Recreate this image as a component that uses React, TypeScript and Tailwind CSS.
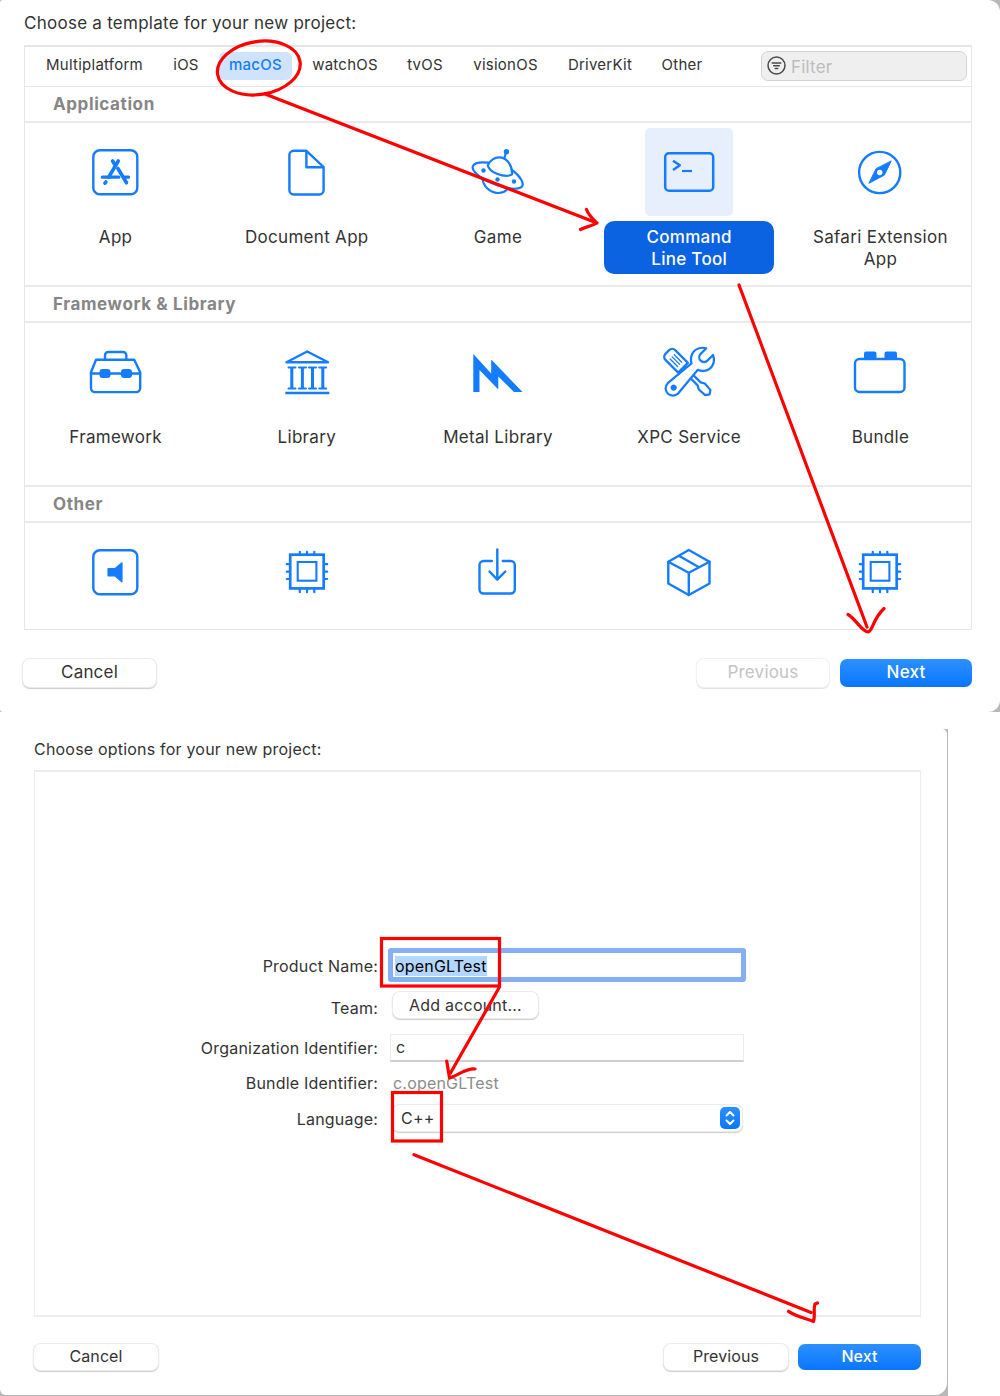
import type { ReactNode } from "react";

const BLUE = "#147cff";

function Icon({ children, sw = 2.4 }: { children: ReactNode; sw?: number }) {
  return (
    <svg
      width="60"
      height="60"
      viewBox="0 0 60 60"
      fill="none"
      stroke={BLUE}
      strokeWidth={sw}
      strokeLinecap="round"
      strokeLinejoin="round"
    >
      {children}
    </svg>
  );
}

const AppIcon = () => (
  <Icon>
    <rect x="7.3" y="8.3" width="44" height="44" rx="6.5" />
    <g strokeWidth="3.6" transform="translate(-0.7 0)">
      <path d="M27.3 19l2 3.2M33 19L23.4 35.2" />
      <path d="M32.6 26.5l8.6 14.3" />
      <path d="M17 35.2h16.5M39.7 35.2h3.6" strokeWidth="3.2" />
      <path d="M20.6 40l-.9 1.2" />
    </g>
  </Icon>
);

const DocIcon = () => (
  <Icon>
    <path d="M16.6 8.8h12.8L46.6 25v23.3a4.2 4.2 0 0 1-4.2 4.2H16.6a4.2 4.2 0 0 1-4.2-4.2V13a4.2 4.2 0 0 1 4.2-4.2z" />
    <path d="M29.4 9.3v16h16.6" />
  </Icon>
);

const GameIcon = () => (
  <Icon sw={2.2}>
    <g transform="translate(-1 2)">
      <path d="M20.8 21.5c2-5.2 7-8.6 12.3-8.1 7.1.7 12.3 8.4 12 16.9-3.1 2-9.3 1.7-15.1-.6-5-1.9-8.5-5-9.2-8.2z" />
      <path d="M21.5 18.7c-7-.8-13.6-.4-15.5 3.2-2 4 4.8 10.5 15.2 15.5 12 5.8 26.5 9.2 32.5 6.2 5.5-3-1-12-8.8-17.7" />
      <path d="M15.5 34.500c.5 7.500 7.500 14.500 15.500 14.500 4.400 0 8-1.500 10-4.600" />
      <path d="M37.3 14.5l1.7-6" />
      <g fill={BLUE} stroke="none">
        <circle cx="39.4" cy="7.7" r="2.7" />
        <circle cx="16.5" cy="26.5" r="2.2" />
        <circle cx="30.5" cy="35.5" r="2.2" />
        <circle cx="47" cy="37.5" r="2.2" />
      </g>
    </g>
  </Icon>
);

const TerminalIcon = () => (
  <Icon sw={2.5}>
    <rect x="6.2" y="11.3" width="48" height="37.5" rx="3.8" />
    <path d="M14 18.7l6.9 4.5L14 28" strokeWidth="2.4" strokeLinecap="butt" />
    <path d="M23 29h10" strokeWidth="2.2" strokeLinecap="butt" />
  </Icon>
);

const SafariIcon = () => (
  <Icon>
    <circle cx="29.7" cy="30.5" r="20.6" />
    <path d="M41 19.3l-6.5 13.7-15.6 8.3 7-14.3z" fill={BLUE} stroke={BLUE} strokeWidth="1" />
    <circle cx="29.7" cy="30.5" r="2.7" fill="#fff" stroke="none" />
  </Icon>
);

const FrameworkIcon = () => (
  <Icon>
    <path d="M19 17.5v-4.2a3.3 3.3 0 0 1 3.3-3.3h14.7a3.3 3.3 0 0 1 3.3 3.3v4.2" />
    <path d="M11 17.7h37.2l6 12.6v15.8a4 4 0 0 1-4 4H9a4 4 0 0 1-4-4V30.3l5-12.6z" />
    <path d="M5 31.5h49" />
    <g fill={BLUE} stroke="none">
      <rect x="13.5" y="27" width="11" height="9" rx="3" />
      <rect x="35" y="27" width="11" height="9" rx="3" />
    </g>
  </Icon>
);

const LibraryIcon = () => (
  <Icon>
    <path d="M9.5 20.3L30.2 9.5l20.9 10.8z" />
    <path d="M8.3 51h44" strokeWidth="2.7" strokeLinecap="butt" />
    <path d="M14.8 25.5v21M25.4 25.5v21M35.5 25.5v21M45.8 25.5v21" strokeWidth="3" strokeLinecap="butt" />
    <path
      d="M11.5 25.5h7M22 25.5h7M32 25.5h7M42.2 25.5h7M11.5 46.5h7M22 46.5h7M32 46.5h7M42.2 46.5h7"
      strokeWidth="2"
    />
  </Icon>
);

const MetalIcon = () => (
  <Icon>
    <path d="M5.3 12L23.2 31.5V17.5L54.5 50H46L30.3 34.5v13L11.5 28V50H5.3z" fill={BLUE} stroke="none" />
  </Icon>
);

const XpcIcon = () => (
  <Icon sw={2.1}>
    <g transform="translate(29.3 31) scale(1.06) rotate(-45)">
      <path d="M-6.5 -7V-24a4 4 0 0 1 4-4h5a4 4 0 0 1 4 4v17z" />
      <path d="M-2.8-21.5v10M0-21.5v10M2.8-21.5v10" strokeWidth="1.2" />
      <path d="M-2 -7V14.5l-2 3.5.5 8 3.5 2.5 3.5-2.5.5-8-2-3.5V-7" />
    </g>
    <g transform="translate(29.3 31) scale(1.06) rotate(45)">
      <path
        fill="#fff"
        d="M-4.2 -8.5C-10.3 -12 -12.3 -18.5 -9.3 -23.7C-8 -26 -6.5 -27.4 -4.5 -28.5V-21a4.5 4.5 0 0 0 9 0V-28.5C11 -25.5 13.3 -18.5 9.8 -13C8.5 -11 6.6 -9.3 4.2 -8.5L6.9 20.5a6.9 6.9 0 0 1-13.8 0z"
      />
      <circle cx="0" cy="19.5" r="1.8" fill={BLUE} />
    </g>
  </Icon>
);

const BundleIcon = () => (
  <Icon>
    <rect x="5" y="17" width="49.5" height="33" rx="4.5" />
    <path
      d="M14 18v-6.500a2 2 0 0 1 2-2h8.500a2 2 0 0 1 2 2v6.500zM34.500 18v-6.500a2 2 0 0 1 2-2h8.500a2 2 0 0 1 2 2v6.500z"
      fill={BLUE}
      stroke="none"
    />
  </Icon>
);

const SpeakerIcon = () => (
  <Icon>
    <rect x="7.3" y="8.3" width="44" height="44" rx="6.5" />
    <path
      d="M22.3 26h6.5l6.5-5.5c.6-.5 1.3-.2 1.3.6v18.5c0 .8-.7 1.1-1.3.6l-6.500-5.700h-6.500a.9.900 0 0 1-.9-.9v-6.700a.9.900 0 0 1 .9-.9z"
      fill={BLUE}
      stroke="none"
    />
  </Icon>
);

const ChipIcon = () => (
  <Icon>
    <g strokeLinejoin="miter" strokeWidth="2.7">
      <rect x="13.2" y="12.7" width="33.5" height="33.7" />
      <rect x="20.7" y="20" width="18.7" height="18.7" strokeWidth="2.1" />
    </g>
    <path
      d="M22.8 12V9.8M30 12V9.8M37.3 12V9.8M22.8 47v3.2M30 47v3.2M37.3 47v3.2M13 22.2H9.8M13 29.7H9.8M13 37H9.8M47 22.2h3.2M47 29.7h3.2M47 37h3.2"
      strokeWidth="2.2"
    />
  </Icon>
);

const DownloadIcon = () => (
  <Icon>
    <path d="M23.8 19h-8.3a4 4 0 0 0-4 4v24.5a4 4 0 0 0 4 4h27.3a4 4 0 0 0 4-4V23a4 4 0 0 0-4-4h-8" />
    <path d="M29.3 7.5v30M21.5 29.5l7.8 8.2 8-8.2" />
  </Icon>
);

const BoxIcon = () => (
  <Icon>
    <path d="M29.8 8l20.7 11.8v21.7L29.8 53 9.3 41.5V19.8z" />
    <path d="M9.3 19.8l20.5 11 20.7-11M29.8 30.8V53M20.3 14L40 25.3" />
  </Icon>
);

type Item = { label: string; icon: ReactNode; selected?: boolean };

const applications: Item[] = [
  { label: "App", icon: <AppIcon /> },
  { label: "Document App", icon: <DocIcon /> },
  { label: "Game", icon: <GameIcon /> },
  { label: "Command Line Tool", icon: <TerminalIcon />, selected: true },
  { label: "Safari Extension App", icon: <SafariIcon /> },
];
const frameworks: Item[] = [
  { label: "Framework", icon: <FrameworkIcon /> },
  { label: "Library", icon: <LibraryIcon /> },
  { label: "Metal Library", icon: <MetalIcon /> },
  { label: "XPC Service", icon: <XpcIcon /> },
  { label: "Bundle", icon: <BundleIcon /> },
];
const others: Item[] = [
  { label: "", icon: <SpeakerIcon /> },
  { label: "", icon: <ChipIcon /> },
  { label: "", icon: <DownloadIcon /> },
  { label: "", icon: <BoxIcon /> },
  { label: "", icon: <ChipIcon /> },
];

function Section({ title, items, height }: { title: string; items: Item[]; height: string }) {
  return (
    <section>
      <h2 className="flex h-9 items-center border-b-2 border-[#eaeaea] pl-7 pt-[2px] text-[17px] font-bold tracking-[0.6px] text-[#868686]">
        {title}
      </h2>
      <div className={`-ml-[5px] grid w-[956px] grid-cols-5 pt-[5px] ${height}`}>
        {items.map((it, i) => (
          <div key={i} className="flex flex-col items-center">
            <div
              className={`flex size-[88px] shrink-0 items-center justify-center rounded-[5px] ${it.selected ? "bg-[#e8effc]" : ""}`}
            >
              {it.icon}
            </div>
            {it.label && (
              <div
                className={`mt-[5px] flex w-[170px] justify-center rounded-[10px] pb-1 pt-[5px] text-center text-[17px] leading-[22px] tracking-[0.3px] ${
                  it.selected ? "bg-[#0b63e2] px-8 font-medium text-white" : "px-4 text-[#333]"
                }`}
              >
                {it.label}
              </div>
            )}
          </div>
        ))}
      </div>
    </section>
  );
}

function PushButton({ children, className }: { children: ReactNode; className: string }) {
  return <button className={`flex items-center justify-center rounded-[7px] ${className}`}>{children}</button>;
}

const plain = "bg-white text-[#333] shadow-[0_0_0_1px_#ebebeb,0_1px_1px_1px_#cccccc]";
const disabled = "bg-white text-[#c4c4c4] shadow-[0_0_0_1px_#f2f2f2,0_1px_1px_1px_#e2e2e2]";
const primary = "bg-linear-to-b from-[#2b90ff] to-[#0676ff] font-medium text-white";

const tabs = [
  { label: "Multiplatform", cls: "w-[97px]" },
  { label: "iOS", cls: "ml-[30px] w-[26px]" },
  { label: "macOS", cls: "ml-[20px] w-[73px] rounded-md bg-[#cfe3fd] font-medium !text-[#147cff]" },
  { label: "watchOS", cls: "ml-[20px] w-[66px]" },
  { label: "tvOS", cls: "ml-[29px] w-[36px]" },
  { label: "visionOS", cls: "ml-[30px] w-[65px]" },
  { label: "DriverKit", cls: "ml-[30px] w-[64px]" },
  { label: "Other", cls: "ml-[29px] w-[42px]" },
];

function TemplateDialog() {
  return (
    <div className="h-[712px] w-[1000px] bg-[#b8b8b8]">
      <div className="h-full overflow-hidden rounded-[3px_12px_12px_3px] bg-white pl-6 pt-[11px]">
        <h1 className="h-[35px] text-[17px] leading-6 tracking-[0.26px] text-[#333]">
          Choose a template for your new project:
        </h1>
        <div className="-mt-px h-[585px] w-[948px] overflow-hidden border border-[#e6e6e6] border-t-2">
          <div className="flex h-[40px] items-center border-b border-[#e6e6e6] pb-[2px] pl-[21px] pr-1">
            {tabs.map((t) => (
              <div
                key={t.label}
                className={`flex h-7 shrink-0 items-center justify-center whitespace-nowrap text-[15px] tracking-[0.25px] text-[#333] ${t.cls}`}
              >
                {t.label}
              </div>
            ))}
            <div className="ml-auto flex h-[30px] w-[206px] items-center rounded-[7px] border border-[#d3d3d3] bg-[#efefef] pl-[5px]">
              <svg width="20" height="20" viewBox="0 0 20 20" fill="none" stroke="#4a4a4a" strokeWidth="1.5" strokeLinecap="round">
                <circle cx="9.5" cy="9.5" r="8.5" />
                <path d="M5.2 7h8.6M6.7 9.7h5.6M8.2 12.4h2.6" />
              </svg>
              <span className="ml-1 pt-[4px] text-[17px] tracking-[0.2px] text-[#bdbdbd]">Filter</span>
            </div>
          </div>
          <Section title="Application" items={applications} height="h-[162px]" />
          <div className="border-t-2 border-[#eaeaea]">
            <Section title="Framework & Library" items={frameworks} height="h-[162px]" />
          </div>
          <div className="border-t-2 border-[#eaeaea]">
            <Section title="Other" items={others} height="h-[110px]" />
          </div>
        </div>
        <div className="mt-[29px] flex text-[17px] tracking-[0.2px]">
          <PushButton className={`-ml-px h-7 w-[133px] pb-px ${plain}`}>Cancel</PushButton>
          <PushButton className={`ml-[541px] h-7 w-[132px] pb-px ${disabled}`}>Previous</PushButton>
          <PushButton className={`ml-[11px] h-7 w-[132px] pb-px ${primary}`}>Next</PushButton>
        </div>
      </div>
    </div>
  );
}

function Row({ label, className, children }: { label: string; className: string; children: ReactNode }) {
  return (
    <div className={`flex items-center ${className}`}>
      <div className="w-[343px] shrink-0 whitespace-nowrap pt-[2px] text-right">{label}</div>
      {children}
    </div>
  );
}

function OptionsDialog() {
  return (
    <div className="mt-[17px] h-[667px] w-[948px] bg-[#b8b8b8] pb-px pr-[1.5px]">
      <div className="h-full overflow-hidden rounded-[0_5px_12px_6px] bg-white pl-[34px] pt-2 text-[16px] tracking-[0.2px] text-[#333]">
        <h1 className="h-[33px] leading-6">Choose options for your new project:</h1>
        <div className="h-[547px] w-[887px] border-2 border-[#ededed] border-l border-r">
          <Row label="Product Name:" className="mt-[175px] h-[36px]">
            <div className="ml-[10px] flex h-[34px] w-[358px] items-center rounded-[3px] border-[5px] border-[#85aff5] bg-white pl-[2px]">
              <span className="mt-px bg-[#b3d7ff] leading-5 text-black">openGLTest</span>
            </div>
          </Row>
          <Row label="Team:" className="mt-[8px] h-[32px]">
            <PushButton className={`mb-1 ml-[15px] h-[26px] w-[145px] ${plain}`}>Add account...</PushButton>
          </Row>
          <Row label="Organization Identifier:" className="mt-[9px] h-[30px]">
            <div className="ml-[12px] mt-px flex h-[28px] w-[354px] items-center border border-b-2 border-[#ececec] border-b-[#cfcfcf] bg-white pl-[5px]">
              c
            </div>
          </Row>
          <Row label="Bundle Identifier:" className="mt-[8px] h-[24px]">
            <div className="ml-[15px] pt-[2px] text-[#8b8b8b]">c.openGLTest</div>
          </Row>
          <Row label="Language:" className="mt-[10px] h-[28px]">
            <div className="ml-[15px] flex h-[26px] w-[349px] items-center justify-between rounded-[6px] bg-white pl-2 pr-[2px] shadow-[0_0_0_1px_#ebebeb,0_1px_1px_1px_#cccccc]">
              C++
              <span className="flex h-[22px] w-5 items-center justify-center rounded-[5px] bg-linear-to-b from-[#2b90ff] to-[#0676ff]">
                <svg width="12" height="16" viewBox="0 0 12 16" fill="none" stroke="#fff" strokeWidth="2" strokeLinecap="round" strokeLinejoin="round">
                  <path d="M2.5 5.5L6 2l3.5 3.5M2.5 10.5L6 14l3.5-3.5" />
                </svg>
              </span>
            </div>
          </Row>
        </div>
        <div className="mt-[27px] flex tracking-[0.1px]">
          <PushButton className={`h-[26px] w-[124px] pb-[2px] ${plain}`}>Cancel</PushButton>
          <PushButton className={`ml-[506px] h-[26px] w-[124px] pb-[2px] ${plain}`}>Previous</PushButton>
          <PushButton className={`ml-[10px] h-[26px] w-[123px] pb-[2px] ${primary}`}>Next</PushButton>
        </div>
      </div>
    </div>
  );
}

function Annotations() {
  return (
    <svg
      className="pointer-events-none absolute left-0 top-0"
      width="1000"
      height="1396"
      viewBox="0 0 1000 1396"
      fill="none"
      stroke="#ff0000"
      strokeWidth="3.2"
      strokeLinecap="round"
      strokeLinejoin="round"
    >
      <ellipse cx="258.8" cy="68" rx="41.7" ry="26.5" transform="rotate(-9 258.8 68)" />
      <path d="M265 94L597 223M586.5 209.5C589 216 593 219 597 223C592 226 585 227 580.5 229.5" />
      <path d="M739 285L867 627M848 614.5C856 619 862 632 868 632C873 631 872 620 884 608.5" />
      <rect x="381.5" y="938.5" width="118" height="47.5" strokeLinejoin="miter" />
      <path d="M499.5 987L450.5 1073M446.7 1061L449.5 1078C459 1075 466 1068 475 1069" />
      <rect x="392.5" y="1092.5" width="49" height="48.5" strokeLinejoin="miter" />
      <path d="M414 1154.7L811 1312.5M788.5 1311.3C797 1317 805 1318 813.5 1321.5C815.5 1315 813 1309 815 1304L817.5 1303" />
    </svg>
  );
}

export default function App() {
  return (
    <div className="relative h-[1396px] w-[1000px] overflow-hidden bg-white font-['Inter',sans-serif]">
      <TemplateDialog />
      <OptionsDialog />
      <Annotations />
    </div>
  );
}
